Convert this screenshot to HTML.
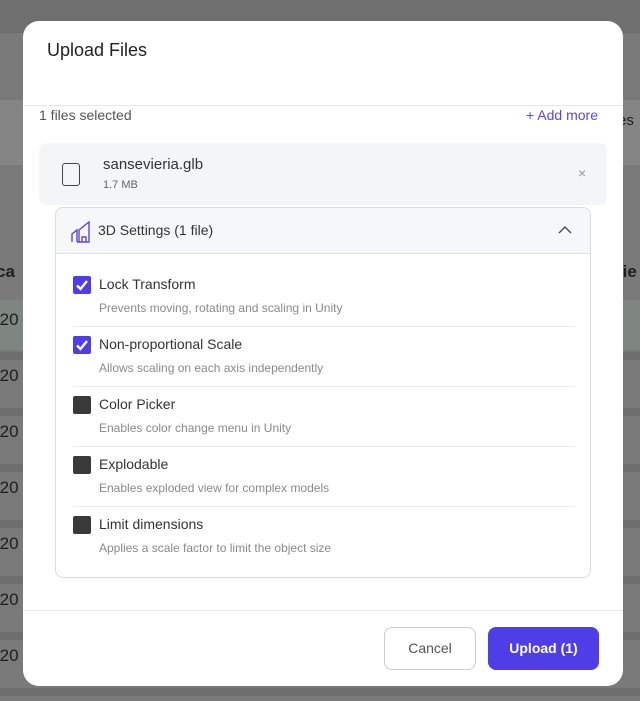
<!DOCTYPE html>
<html><head><meta charset="utf-8"><style>
*{box-sizing:border-box;margin:0;padding:0}
body{width:640px;height:701px;overflow:hidden;background:#7a7a7a;font-family:"Liberation Sans",sans-serif;position:relative}
.band{position:absolute;left:0;width:640px;background:#6e6e6e}
.bg{position:absolute;color:#1e1e1e;font-size:17px}
.modal{position:absolute;left:23px;top:21px;width:600px;height:665px;background:#fff;border-radius:16px;overflow:hidden}
.abs{position:absolute}
.t{position:absolute;white-space:nowrap}
.cb{position:absolute;left:17px;width:18px;height:18px;border-radius:2px;background:#3a3a3a}
.cb.on{background:#4f3ee8}
.title{position:absolute;left:43px;font-size:14px;color:#333}
.desc{position:absolute;left:43px;font-size:12px;color:#8a8a8a}
.div{position:absolute;left:17px;width:502px;height:1px;background:#ececec}
</style></head><body>
<div class="band" style="top:0;height:33px;background:#6f6f6f"></div>
<div class="band" style="top:100px;height:65px;background:#858585"></div>
<div class="band" style="top:300px;height:50px;background:#7f8682"></div>
<div class="band" style="top:352px;height:8px"></div>
<div class="band" style="top:408px;height:8px"></div>
<div class="band" style="top:464px;height:8px"></div>
<div class="band" style="top:520px;height:8px"></div>
<div class="band" style="top:576px;height:8px"></div>
<div class="band" style="top:632px;height:8px"></div>
<div class="band" style="top:688px;height:8px"></div>
<div class="bg" style="left:-4px;top:262px;font-weight:bold">ca</div>
<div class="bg" style="left:616px;top:262px;font-weight:bold">rie</div>
<div class="bg" style="left:618px;top:112px;font-size:15px">es</div>
<div class="bg" style="left:-6px;top:310px">-20</div>
<div class="bg" style="left:-6px;top:366px">-20</div>
<div class="bg" style="left:-6px;top:422px">-20</div>
<div class="bg" style="left:-6px;top:478px">-20</div>
<div class="bg" style="left:-6px;top:534px">-20</div>
<div class="bg" style="left:-6px;top:590px">-20</div>
<div class="bg" style="left:-6px;top:646px">-20</div>

<div class="modal">
 <div class="t" style="left:24px;top:19px;font-size:18px;color:#222">Upload Files</div>
 <div class="abs" style="left:0;top:84px;width:600px;height:1px;background:#e8e8e8"></div>
 <div class="t" style="left:16px;top:86px;font-size:14px;color:#555">1 files selected</div>
 <div class="t" style="right:25px;top:86px;font-size:14px;color:#5a48e0">+ Add more</div>
 <div class="abs" style="left:16px;top:122px;width:568px;height:62px;background:#f4f5f7;border-radius:8px">
  <div class="abs" style="left:23px;top:20px;width:18px;height:23px;border:1.5px solid #444;border-radius:3px"></div>
  <div class="t" style="left:64px;top:13px;font-size:15px;color:#333">sansevieria.glb</div>
  <div class="t" style="left:64px;top:36px;font-size:11px;color:#666">1.7 MB</div>
  <div class="t" style="left:539px;top:22px;font-size:14px;color:#999">×</div>
 </div>
 <div class="abs" style="left:32px;top:186px;width:536px;height:371px;border:1px solid #dcdcdc;border-radius:8px;overflow:hidden">
  <div class="abs" style="left:0;top:0;width:536px;height:46px;background:#f6f7f9;border-bottom:1px solid #e0e0e0">
   <svg class="abs" style="left:15px;top:13px" width="20" height="22" viewBox="0 0 20 22" fill="none" stroke="#5a48e0" stroke-width="1.4"><path d="M1 21V13L6 9V21M6 21H18V1L8 9V21M11 21V16H15V21"/></svg>
   <div class="t" style="left:42px;top:14px;font-size:14px;color:#333">3D Settings (1 file)</div>
   <svg class="abs" style="left:502px;top:17px" width="14" height="9" viewBox="0 0 14 9" fill="none" stroke="#444" stroke-width="1.3"><path d="M1 8L7 2L13 8"/></svg>
  </div>
  <div class="cb on" style="top:68px"><svg width="18" height="18" viewBox="0 0 18 18"><path d="M4 9.5L7.5 13L14 5" fill="none" stroke="#fff" stroke-width="2.4"/></svg></div>
  <div class="title" style="top:68px">Lock Transform</div>
  <div class="desc" style="top:93px">Prevents moving, rotating and scaling in Unity</div>
  <div class="div" style="top:118px"></div>
  <div class="cb on" style="top:128px"><svg width="18" height="18" viewBox="0 0 18 18"><path d="M4 9.5L7.5 13L14 5" fill="none" stroke="#fff" stroke-width="2.4"/></svg></div>
  <div class="title" style="top:128px">Non-proportional Scale</div>
  <div class="desc" style="top:153px">Allows scaling on each axis independently</div>
  <div class="div" style="top:178px"></div>
  <div class="cb" style="top:188px"></div>
  <div class="title" style="top:188px">Color Picker</div>
  <div class="desc" style="top:213px">Enables color change menu in Unity</div>
  <div class="div" style="top:238px"></div>
  <div class="cb" style="top:248px"></div>
  <div class="title" style="top:248px">Explodable</div>
  <div class="desc" style="top:273px">Enables exploded view for complex models</div>
  <div class="div" style="top:298px"></div>
  <div class="cb" style="top:308px"></div>
  <div class="title" style="top:308px">Limit dimensions</div>
  <div class="desc" style="top:333px">Applies a scale factor to limit the object size</div>
 </div>
 <div class="abs" style="left:0;top:589px;width:600px;height:1px;background:#e8e8e8"></div>
 <div class="abs" style="left:361px;top:606px;width:92px;height:43px;border:1px solid #ccc;border-radius:8px;font-size:14px;color:#555;text-align:center;line-height:41px">Cancel</div>
 <div class="abs" style="left:465px;top:606px;width:111px;height:43px;background:#4f3ee8;border-radius:8px;font-size:14px;color:#fff;font-weight:bold;text-align:center;line-height:43px">Upload (1)</div>
</div>
</body></html>
